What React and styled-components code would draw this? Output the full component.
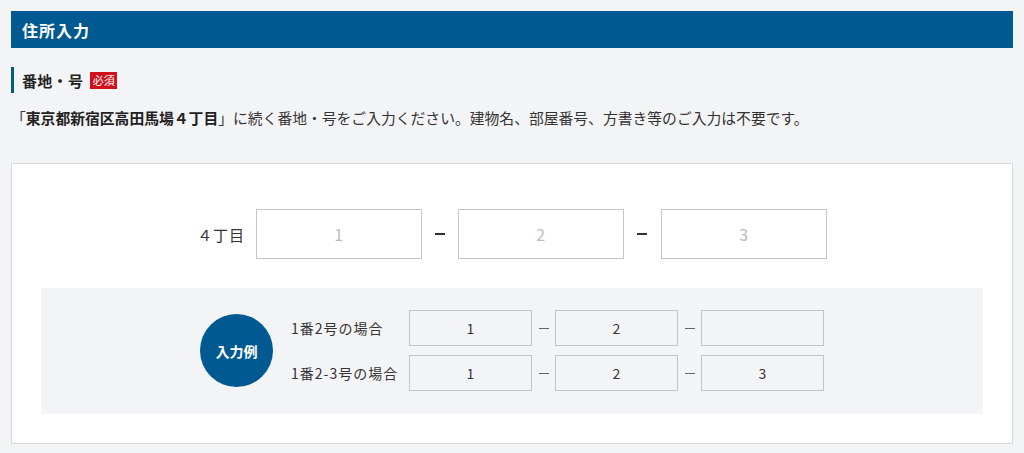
import React from "react";
import styled, { createGlobalStyle } from "styled-components";

const BLUE = "#005991";

const GlobalStyle = createGlobalStyle`
  html, body {
    margin: 0;
    padding: 0;
    background: #f3f4f6;
  }
  body {
    font-family: "Noto Sans CJK JP", "Noto Sans", sans-serif;
    color: #333;
  }
  * { box-sizing: border-box; }
`;

const Page = styled.div`
  padding: 11px;
`;

const Header = styled.h1`
  margin: 0;
  height: 37px;
  display: flex;
  align-items: center;
  padding-left: 11px;
  background: ${BLUE};
  color: #fff;
  font-size: 16px;
  font-weight: 700;
  letter-spacing: 1px;
`;

const SectionTitle = styled.h2`
  margin: 19px 0 0;
  height: 26px;
  display: flex;
  align-items: center;
  gap: 7px;
  padding-left: 8px;
  border-left: 3px solid ${BLUE};
  font-size: 15px;
  font-weight: 700;
  letter-spacing: 0.3px;
  color: #222;
`;

const Badge = styled.span`
  display: inline-flex;
  align-items: center;
  justify-content: center;
  width: 27px;
  height: 17px;
  background: #d0101b;
  color: #fff;
  font-size: 11px;
  font-weight: 400;
  letter-spacing: 0;
`;

const Description = styled.p`
  margin: 13px 0 0;
  font-size: 14.8px;
  line-height: 24px;
  color: #333;

  strong {
    font-weight: 700;
    color: #222;
  }
`;

const Card = styled.section`
  margin-top: 33px;
  background: #fff;
  border: 1px solid #d9d9d9;
  padding: 45px 29px 29px;
`;

const MainRow = styled.div`
  display: flex;
  justify-content: center;
  align-items: center;
`;

const ChomeLabel = styled.span`
  font-size: 15px;
  letter-spacing: 0.8px;
  margin-right: 11px;
  color: #333;
`;

const BigInput = styled.input`
  width: 166px;
  height: 50px;
  border: 1px solid #c6c6c6;
  background: #fff;
  text-align: center;
  font-family: inherit;
  font-size: 16px;
  color: #333;
  outline: none;

  &::placeholder {
    color: #bdbdbd;
  }
`;

/* short horizontal rule between the number boxes */
const Dash = styled.span`
  width: ${(p) => p.$width}px;
  display: flex;
  justify-content: center;
  align-items: center;

  &::before {
    content: "";
    display: block;
    width: 10px;
    height: ${(p) => p.$thick}px;
    background: ${(p) => p.$color};
  }
`;

const ExamplePanel = styled.div`
  margin-top: 29px;
  background: #f3f4f6;
  padding: 22px 0 23px;
  display: flex;
  justify-content: center;
  align-items: center;
`;

const Circle = styled.div`
  width: 73px;
  height: 73px;
  border-radius: 50%;
  background: ${BLUE};
  color: #fff;
  display: flex;
  align-items: center;
  justify-content: center;
  font-size: 14px;
  font-weight: 700;
  margin-right: 18px;
`;

const ExampleRows = styled.div`
  display: flex;
  flex-direction: column;
  gap: 9px;
`;

const ExampleRow = styled.div`
  display: flex;
  align-items: center;
`;

const ExampleLabel = styled.span`
  width: 118px;
  font-size: 14px;
  letter-spacing: 1px;
  color: #333;
  white-space: nowrap;
`;

const SmallInput = styled.input`
  width: 123px;
  height: 36px;
  border: 1px solid #c4c4c4;
  background: transparent;
  text-align: center;
  font-family: inherit;
  font-size: 14px;
  color: #333;
  outline: none;
`;

const examples = [
  { label: "1番2号の場合", values: ["1", "2", ""] },
  { label: "1番2-3号の場合", values: ["1", "2", "3"] },
];

export default function App() {
  return (
    <>
      <GlobalStyle />
      <Page>
        <Header>住所入力</Header>
        <SectionTitle>
          番地・号<Badge>必須</Badge>
        </SectionTitle>
        <Description>
          「<strong>東京都新宿区高田馬場４丁目</strong>」に続く番地・号をご入力ください。建物名、部屋番号、方書き等のご入力は不要です。
        </Description>
        <Card>
          <MainRow>
            <ChomeLabel>４丁目</ChomeLabel>
            <BigInput placeholder="1" />
            <Dash $width={36} $thick={2} $color="#333" />
            <BigInput placeholder="2" />
            <Dash $width={37} $thick={2} $color="#333" />
            <BigInput placeholder="3" />
          </MainRow>
          <ExamplePanel>
            <Circle>入力例</Circle>
            <ExampleRows>
              {examples.map((ex) => (
                <ExampleRow key={ex.label}>
                  <ExampleLabel>{ex.label}</ExampleLabel>
                  <SmallInput readOnly defaultValue={ex.values[0]} />
                  <Dash $width={23} $thick={1} $color="#666" />
                  <SmallInput readOnly defaultValue={ex.values[1]} />
                  <Dash $width={23} $thick={1} $color="#666" />
                  <SmallInput readOnly defaultValue={ex.values[2]} />
                </ExampleRow>
              ))}
            </ExampleRows>
          </ExamplePanel>
        </Card>
      </Page>
    </>
  );
}
